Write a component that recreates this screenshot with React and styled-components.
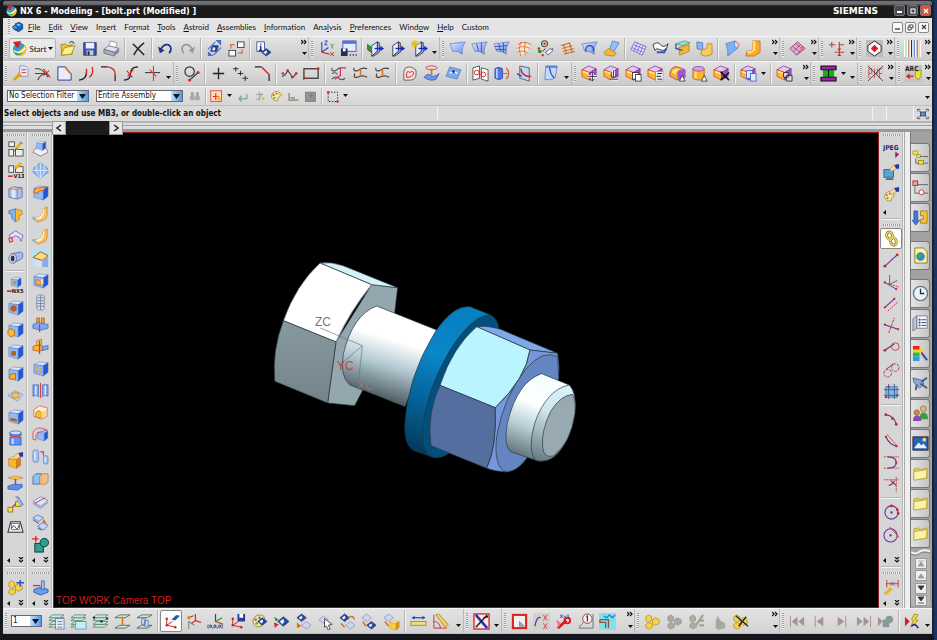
import React from "react";
import styled, { createGlobalStyle, css } from "styled-components";

const GlobalStyle = createGlobalStyle`
  * { box-sizing: border-box; }
  html, body, #root { height: 100%; }
  body {
    margin: 0;
    overflow: hidden;
    background: #1c3565;
    font-family: "DejaVu Sans Condensed", "DejaVu Sans", sans-serif;
    font-size: 8px;
    color: #111;
  }
  button, select { font: inherit; color: inherit; }
`;

/* ---------- drawing helpers ---------- */

const P = ({ d, c = "#333", w = 1, f = "none", dash }) => (
  <path d={d} stroke={c} strokeWidth={w} fill={f} strokeDasharray={dash} />
);

const Dots = ({ at, c = "#d22", r = 1.2 }) =>
  at.map(([x, y]) => <circle key={`${x}-${y}`} cx={x} cy={y} r={r} fill={c} />);

const Cube = ({ x = 0, y = 0, s = 1, top = "#d3e8ff", left = "#8fbcf7", right = "#2455d6", c = "#4a6db5" }) => (
  <g transform={`translate(${x} ${y}) scale(${s})`} stroke={c} strokeWidth=".5">
    <path d="M2 5 L7 2 L17 3 L12 6Z" fill={top} />
    <path d="M2 5 L12 6 L12 17 L2 14Z" fill={left} />
    <path d="M12 6 L17 3 L17 13 L12 17Z" fill={right} />
  </g>
);

const GoldCube = ({ x, y, s }) => (
  <Cube x={x} y={y} s={s} top="#fff3a0" left="#f7cf3e" right="#d99a14" c="#a8780c" />
);

const PurpleCube = () => (
  <>
    <path d="M1 5 L8 1 L16 4 L9 8Z" fill="#e9c6f7" stroke="#84308f" strokeWidth=".8" />
    <path d="M1 5 L9 8 L9 16 L1 12Z" fill="#ffb52e" stroke="#d04a10" strokeWidth=".8" />
    <path d="M9 8 L16 4 L16 12 L9 16Z" fill="#a04fd0" stroke="#84308f" strokeWidth=".8" />
    <path d="M2 6 L8 8 L8 10 L2 8Z" fill="#ffe680" />
  </>
);

const Diamond = ({ x = 9, y = 9, r = 5, f = "#2c4a94" }) => (
  <>
    <path d={`M${x - r - 1} ${y} L${x} ${y - r} L${x + r + 1} ${y} L${x} ${y + r}Z`} fill={f} stroke="#22386f" strokeWidth=".7" />
    <path d={`M${x - r + 1} ${y} L${x} ${y - r + 2} L${x + 1} ${y} L${x - 1} ${y + r - 2}Z`} fill="#eaf2ff" />
  </>
);

const PaleDiamond = ({ x, y }) => (
  <path d={`M${x - 5} ${y} L${x} ${y - 4} L${x + 5} ${y} L${x} ${y + 4}Z`} fill="#cdd7ee" stroke="#8795b8" strokeWidth=".8" />
);

const Layers = () => (
  <>
    {[15, 12, 8, 5].map((y) => (
      <path key={y} d={`M1 ${y} L5 ${y - 3} L17 ${y - 3} L13 ${y}Z`} fill="#c6ecd8" stroke="#4a6d60" strokeWidth=".7" />
    ))}
  </>
);

const Axes = ({ c = "#c22" }) => (
  <>
    <P d="M4 6 V13 L13 15 M4 13 L10 9" c={c} />
    <Dots at={[[4, 6], [13, 15], [4, 13]]} c={c} r={1.3} />
  </>
);

const Prism = ({ x = 0 }) => (
  <>
    <path d={`M${4 + x} 6 L${10 + x} 2 V12 L${4 + x} 17Z`} fill="#e3ecff" stroke="#223" strokeWidth=".8" />
    <path d={`M${10 + x} 2 L${12 + x} 3 V13 L${6 + x} 17 H${4 + x} L${10 + x} 12Z`} fill="#9db7f3" stroke="#223" strokeWidth=".8" />
    <P d={`M${7 + x} 9 H${14 + x}`} c="#1626b8" w={1.4} />
    <path d={`M${13 + x} 6 L${17 + x} 9 L${13 + x} 12Z`} fill="#1626b8" />
  </>
);

const Sheet = ({ f = "url(#sheetFill)" }) => (
  <path d="M1 4 L17 2 Q13 8 14 15 Q9 11 4 12Z" fill={f} stroke="#5a78c0" strokeWidth=".7" />
);

const Palette = () => (
  <>
    <path d="M2 9 Q3 2 10 2 Q16 3 14 9 Q10 10 11 14 Q4 17 2 9Z" fill="#f8e6a0" stroke="#8a6d1c" strokeWidth=".8" />
    <Dots at={[[5, 7]]} c="#d33" r={1.3} />
    <Dots at={[[9, 5]]} c="#28b" r={1.3} />
    <Dots at={[[6, 11]]} c="#3a3" r={1.3} />
  </>
);

const Hand = () => (
  <>
    <path d="M7 5 L12 1 L14 5 L9 8Z" fill="#ffd2a0" stroke="#a86" strokeWidth=".6" />
    <path d="M12 1 L17 0 V5 L14 5Z" fill="#2337a0" />
  </>
);

const Blocks = ({ f = "#f8d34a", c = "#a8810c", third = true }) => (
  <g fill={f} stroke={c} strokeWidth=".7">
    <path d="M2 4 L5 2 L8 4 V8 L5 10 L2 8Z" />
    {third && <path d="M9 7 L12 5 L16 7 V11 L12 13 L9 11Z" />}
    <path d="M2 12 L5 10 L9 12 V15 L5 17 L2 15Z" />
  </g>
);

/* blue block with a yellow feature on its front face */
const Feature = ({ children }) => (
  <>
    <Cube />
    <g fill="#ffb638" stroke="#a85f10" strokeWidth=".8">{children}</g>
  </>
);

const icons = {
  nx: (
    <>
      <circle cx="9" cy="10" r="7" fill="#2f9bd8" />
      <path d="M3 13 Q10 13 15 5 Q19 12 11 17 Q6 18 3 13Z" fill="#f2c522" />
      <path d="M4 9 Q7 15 13 13 Q9 18 4 15Z" fill="#35a853" />
      <P d="M3 11 Q9 17 15 8" c="#fff" w={1.4} />
      <path d="M2 2 L11 1 L7 9Z" fill="#d8201c" />
    </>
  ),
  part: (
    <>
      <path d="M5 4 L11 2 L16 5 V12 L10 16 L4 13Z" fill="#1765b8" stroke="#0b3566" />
      <path d="M1 8 L6 6 L9 9 L6 13 L2 12Z" fill="#3e93e8" stroke="#0b3566" />
      <path d="M7 5 L11 4 L13 6 L9 8Z" fill="#8ec8ff" />
    </>
  ),
  open: (
    <>
      <path d="M2 5 L7 4 L9 6 L14 5 V15 L3 16Z" fill="#e9c53e" stroke="#9a7d14" strokeWidth=".8" />
      <path d="M2 16 L6 8 L17 6 L13 15Z" fill="#fdf08a" stroke="#9a7d14" strokeWidth=".8" />
      <P d="M11 3 Q14 0 16 4" c="#2a8a2a" w={1.4} />
    </>
  ),
  save: (
    <>
      <rect x="3" y="3" width="13" height="13" fill="#3f58b4" stroke="#1d2c68" />
      <rect x="5" y="3" width="9" height="6" fill="#e8f0ff" />
      <rect x="6" y="11" width="7" height="5" fill="#c8ccd8" />
      <rect x="7" y="12" width="2" height="4" fill="#223" />
    </>
  ),
  print: (
    <>
      <path d="M6 7 L8 1 L15 3 L13 9Z" fill="#fff" stroke="#889" strokeWidth=".8" />
      <path d="M1 10 L6 6 L17 9 L12 13Z" fill="#dfe3ec" stroke="#667" strokeWidth=".8" />
      <path d="M1 10 L12 13 V17 L1 14Z" fill="#aab1c0" stroke="#667" strokeWidth=".8" />
      <path d="M12 13 L17 9 V13 L12 17Z" fill="#7f889c" />
    </>
  ),
  cut: <P d="M3 4 L15 16 M15 3 Q8 8 4 16" c="#222" w={1.5} />,
  undo: (
    <>
      <P d="M4 10 Q7 4 12 5 Q17 8 13 14" c="#1c2f80" w={1.8} />
      <path d="M1 7 L3 14 L8 11Z" fill="#1c2f80" />
    </>
  ),
  redo: (
    <>
      <P d="M14 10 Q11 4 6 5 Q1 8 5 14" c="#999" w={1.8} />
      <path d="M17 7 L15 14 L10 11Z" fill="#999" />
    </>
  ),
  swap: (
    <>
      <g transform="rotate(-35 9 9)"><Diamond r={4} /></g>
      <P d="M2 10 L10 2 M8 16 L16 8" c="#4a6fd0" w={1.2} />
      <path d="M10 0 H16 V6Z M2 12 V17 H8Z" fill="#4a6fd0" />
    </>
  ),
  windows: (
    <>
      <rect x="10" y="2" width="7" height="6" fill="#fff" stroke="#444" />
      <rect x="1" y="11" width="7" height="6" fill="#fff" stroke="#444" />
      <P d="M3 9 V5 H7 M11 14 H15 V10" c="#d66a4a" w={1.3} />
    </>
  ),
  info: (
    <>
      <rect x="2" y="2" width="8" height="10" fill="#fff" stroke="#223a8a" strokeWidth=".8" />
      <P d="M6 4 V5 M6 6 V11 M4 11 H8" c="#1b2d80" w={1.6} />
      <Diamond x={12} y={13} r={4} />
    </>
  ),
  wcs: (
    <>
      <P d="M4 2 V13 M4 13 L11 8" c="#2a48c8" w={1.2} />
      <P d="M4 13 L12 15" c="#c22" w={1.2} />
      <P d="M7 1 H10 L7 5 H10" c="#2a48c8" />
      <P d="M13 4 L15 6 L17 4 M15 6 V9" c="#292" />
      <P d="M13 13 L17 17 M17 13 L13 17" c="#c22" />
    </>
  ),
  layoutSave: (
    <>
      <rect x="3" y="1" width="14" height="11" fill="#e5ecff" stroke="#4562b0" />
      <rect x="3" y="1" width="14" height="3" fill="#4f73d8" />
      <rect x="1" y="9" width="7" height="8" fill="#222b55" />
      <rect x="3" y="9" width="3" height="3" fill="#fff" />
      <Dots at={[[11, 16], [14, 16], [17, 16]]} c="#222" r={0.8} />
    </>
  ),
  prismCursor: (<><Prism x={1} /><path d="M0 4 L5 7 L3 13 L0 10Z" fill="#1e9a3a" /><P d="M2 10 L5 13" c="#c22" w={1.5} /></>),
  prism: <Prism x={0} />,
  prismNew: (<><Prism x={1} /><P d="M4 0 V9 M0 4 H9 M1 1 L7 7 M7 1 L1 7" c="#e3c112" w={1.3} /></>),
  sheet: <Sheet />,
  sheetTwo: (<><Sheet /><P d="M6 4 L8 12 M11 3 L11 13" c="#3450b8" /></>),
  sheetGrid: (<><Sheet /><P d="M6 4 L8 12 M11 3 L11 13 M2 7 L15 6 M3 10 L14 10" c="#3450b8" /></>),
  mesh: (
    <>
      <path d="M3 5 L10 2 L16 5 L13 14 L6 16 L2 12Z" fill="#ffe3cc" />
      <P d="M3 5 Q9 0 17 5 M2 9 Q9 5 16 9 M2 13 Q9 10 14 14 M6 2 Q3 9 6 17 M11 2 Q9 9 11 16" c="#d2703a" w={0.9} />
    </>
  ),
  curveNet: (
    <>
      <P d="M9 9 L6 12 M10 13 L17 9" c="#333" />
      <circle cx="8" cy="4" r="3.2" fill="none" stroke="#353" strokeWidth="1.2" />
      <path d="M9 13 L14 9 L17 11 L12 16Z" fill="#eef" stroke="#447" strokeWidth=".8" />
      <Dots at={[[3, 12]]} c="#292" r={2} />
      <Dots at={[[8, 4], [6, 16], [2, 9]]} c="#d22" r={1.3} />
    </>
  ),
  ribbons: (
    <>
      <path d="M2 8 L12 3 L16 8 L6 14Z" fill="#ffd89a" />
      <P d="M2 6 L12 3 M3 9 L14 6 M4 12 L16 9 M5 15 L17 12" c="#e07a20" w={1.2} />
      <P d="M5 5 L8 15 M11 3 L14 13" c="#3a62c8" w={0.8} />
    </>
  ),
  patch: (<><Sheet /><P d="M5 12 Q5 6 9 6 Q14 6 13 12" c="#2b3f98" w={1.2} /></>),
  sweep: (
    <>
      <path d="M10 1 L17 3 L11 13 L7 10Z" fill="#8fc3f7" stroke="#3f6dc0" strokeWidth=".7" />
      <path d="M1 13 L6 9 L14 14 L12 17 L3 16Z" fill="#fbb92e" stroke="#b06d10" strokeWidth=".7" />
    </>
  ),
  grid: (
    <>
      <path d="M5 2 L17 7 L13 16 L1 10Z" fill="#dde4ff" />
      <P d="M5 2 L17 7 L13 16 L1 10Z M4 5 L16 10 M2 8 L14 13 M8 3 L4 12 M11 5 L7 13 M14 6 L10 15" c="#7b69cf" w={0.9} />
    </>
  ),
  bands: (<><path d="M1 5 Q6 1 9 5 T17 4 L15 10 Q11 12 8 10 T3 11Z" fill="#fff" stroke="#222" strokeWidth=".9" /><P d="M5 13 H13 L15 9" c="#3158c8" w={2} /></>),
  trim: (
    <>
      <path d="M2 4 L11 1 L17 3 L9 6Z" fill="#9ee0c0" stroke="#387" strokeWidth=".7" />
      <path d="M5 8 L16 5 V12 L6 16Z" fill="#f8b638" stroke="#a86a10" strokeWidth=".7" />
      <P d="M2 4 V9 L9 11" c="#2a58b8" w={1.4} />
    </>
  ),
  extend: (<><path d="M1 2 L7 3 V11 L1 9Z" fill="#89b7f6" stroke="#3b62b0" strokeWidth=".7" /><path d="M7 9 Q12 12 12 4 L17 4 V15 Q10 19 5 15Z" fill="#fcc860" stroke="#b5731a" strokeWidth=".7" /></>),
  offsetFace: (<><path d="M3 4 L13 1 Q10 6 15 9 L5 17 Q6 10 3 4Z" fill="#7fb0f5" stroke="#4a6dba" strokeWidth=".7" /><P d="M13 1 L17 5 L15 9" c="#c25" w={0.8} /></>),
  flange: (<><path d="M8 1 H16 V13 L10 17 H1 L2 12 L8 11Z" fill="#fbab26" stroke="#b8620a" strokeWidth=".7" /><path d="M8 1 H11 V11 L4 15 L2 12 L8 11Z" fill="#ffe07a" /></>),
  surface: (<><path d="M1 9 L9 2 L17 9 L8 16Z" fill="#c4b2e6" stroke="#b02a4a" strokeWidth=".9" /><P d="M4 7 L12 13 M7 4 L15 10 M5 12 L12 5 M9 15 L15 7" c="#c23a5a" w={0.8} /></>),
  dims: (<><P d="M1 5 H8 M11 5 H17 M4 2 V8 M12 2 V16 M7 13 H17" c="#b44" w={1.2} /><path d="M10 9 L12 12 L14 9Z M10 17 L12 14 L14 17Z" fill="#d22" /></>),
  gem: (<><rect x="0" y="0" width="18" height="18" fill="#bdbdbd" /><path d="M9 1 L16 6 V12 L9 17 L2 12 V6Z" fill="#fff" stroke="#222" /><path d="M9 5 L13 9 L9 13 L5 9Z" fill="#e3161a" /></>),
  stripes: (<><rect width="18" height="18" fill="#fff" /><P d="M2 0 V18" c="#8f8" w={1.5} /><P d="M5 0 V18" c="#d88" w={1.5} /><P d="M8 0 V18" c="#333" w={1.3} /><P d="M11 0 V18 M14 0 V18" c="#68c" w={1.4} /><P d="M16 0 V18" c="#fc6" w={1.5} /></>),

  sketchEdit: (<><path d="M8 1 H14 L17 4 V12 H8Z" fill="#e3e8fa" stroke="#88a" strokeWidth=".8" /><P d="M10 5 H15 M10 8 H15" c="#d33" /><P d="M2 16 L8 10" c="#d9a514" w={3} /><P d="M6 9 L10 12" c="#d9a514" w={2.4} /></>),
  trimCurve: (<><P d="M1 4 H5 Q10 5 15 13 M1 9 H12 M4 16 Q7 9 14 9" c="#444" w={1.2} /><P d="M10 4 L17 13 M16 6 L10 11" c="#d22" w={1.2} /></>),
  sheetCorner: (<><path d="M2 2 H10 L16 9 V16 H2Z" fill="#e9ecfb" stroke="#2b3c92" w={1} /><P d="M10 3 L15 9" c="#e88a1a" w={1.8} /></>),
  arcPair: (<><P d="M1 16 Q9 16 9 7" c="#222" w={1.4} /><P d="M9 4 V10 M15 2 Q17 9 12 13" c="#d22" w={1.4} /></>),
  fillet: (<><P d="M1 2 H8" c="#222" w={1.3} /><P d="M8 2 Q16 3 16 10" c="#d22" w={1.5} /><P d="M16 10 V17" c="#222" w={1.3} /></>),
  sCurve: (<><P d="M17 2 Q9 2 9 9 Q9 16 2 16" c="#222" w={1.3} /><P d="M5 6 L11 13 M12 5 L6 12" c="#d22" w={1.2} /></>),
  cross: (<><P d="M1 8 H17" c="#444" w={1.2} /><P d="M10 1 V17 M6 5 L13 12" c="#d33" w={1.1} /></>),
  circleLine: (<><circle cx="7" cy="7" r="5" fill="none" stroke="#333" strokeWidth="1.2" /><P d="M7 16 L16 8" c="#333" w={1.3} /><Dots at={[[7, 16], [16, 8]]} r={1.6} /></>),
  plus: <P d="M9 3 V15 M3 9 H15" c="#222" w={1.4} />,
  pluses: <P d="M4 2 V7 M1 4 H7 M9 6 V11 M6 9 H12 M14 11 V17 M11 14 H17" c="#333" w={1.1} />,
  chamfer: (<><P d="M1 2 H8" c="#222" w={1.3} /><P d="M8 2 L16 10" c="#d22" w={1.5} /><P d="M16 10 V17" c="#222" w={1.3} /></>),
  spline: (<><P d="M1 12 Q4 12 7 6 Q10 9 12 13 Q14 12 17 8" c="#444" w={1.2} /><Dots at={[[2, 9], [7, 6], [12, 13], [16, 9]]} r={1.4} /></>),
  rect: (<><rect x="1" y="4" width="15" height="10" fill="none" stroke="#222" strokeWidth="1.2" /><Dots at={[[1, 14], [16, 4]]} r={1.5} /></>),
  curvesA: (<><P d="M2 3 Q1 7 6 6 Q9 3 11 3 M2 9 Q6 7 8 10 M2 15 Q6 11 9 14 T16 14" c="#555" w={1.2} /><P d="M5 15 L11 11 V3 H17" c="#d25" w={1.2} /></>),
  curvesB: (<><P d="M2 3 Q1 7 6 6 Q11 2 16 4 M3 9 Q1 14 6 13 Q11 10 16 13" c="#444" w={1.2} /><P d="M9 5 V12" c="#e0701a" w={1.6} /></>),
  contour: (<><path d="M3 16 V8 Q3 2 9 2 Q17 3 16 9 Q16 16 10 16Z" fill="#f4dede" stroke="#555" strokeWidth=".9" /><P d="M6 13 V9 Q7 5 9 8 Q14 5 13 10 Q12 13 6 13Z" c="#d22" /></>),
  project: (<><path d="M1 13 Q5 8 8 11 T17 9 L14 15 Q8 18 1 13Z" fill="#6d97ee" stroke="#2747a0" strokeWidth=".7" /><ellipse cx="9" cy="3" rx="6" ry="2" fill="none" stroke="#d33" strokeWidth=".9" /><P d="M9 4 V11" c="#e0701a" w={1.8} /></>),
  bluePatch: (<><path d="M5 2 L17 5 L13 15 L1 12Z" fill="#7ba8f3" stroke="#5a78c0" strokeWidth=".7" /><P d="M5 9 Q9 5 13 9" c="#fff" w={1.4} /><Dots at={[[9, 7]]} c="#223" r={1.4} /></>),
  mirror: (<><path d="M1 3 L8 1 V14 L1 16Z M10 3 L17 5 V17 L10 15Z" fill="#fff" stroke="#444" strokeWidth=".9" /><circle cx="5" cy="8" r="2.5" fill="none" stroke="#d22" /><circle cx="12" cy="10" r="2.5" fill="none" stroke="#d22" /></>),
  wrap: (<><path d="M1 4 Q5 1 9 4 V14 Q5 17 1 14Z" fill="#4f79e6" stroke="#2443a0" strokeWidth=".8" /><P d="M3 4 V14" c="#bcd2ff" w={1.8} /><P d="M9 9 H14 M13 3 Q18 9 13 15" c="#e0501a" w={1.2} /></>),
  isocline: (<><path d="M4 1 L14 3 V17 L4 14Z" fill="#bcd7fb" stroke="#445" strokeWidth=".8" /><P d="M5 4 Q7 13 16 12" c="#d22" w={1.5} /><P d="M1 9 L6 12" c="#24a" w={1.4} /></>),
  section: (<><path d="M3 1 H15 L13 13 Q9 17 2 15Z" fill="#c3d8fa" stroke="#5a78b8" strokeWidth=".8" /><P d="M7 1 Q7 9 12 14" c="#2648b0" w={1.2} /><rect x="3" y="1" width="12" height="2" fill="#5a83d8" /></>),

  cubeMove: (<><PurpleCube /><P d="M12 7 V17 M7 12 H17" c="#fff" w={3} /><P d="M12 7 V17 M7 12 H17 M10 9 L12 7 L14 9 M10 15 L12 17 L14 15" c="#223" /></>),
  cubePull: (<><PurpleCube /><P d="M11 6 V13 M8 15 H16" c="#fff" w={3} /><P d="M11 6 V13 M7 15 H16 M8 11 L11 14 L14 11" c="#223" /></>),
  cubeCopy: (<><PurpleCube /><rect x="8" y="8" width="6" height="7" fill="#fff" stroke="#222" strokeWidth=".8" /><rect x="11" y="10" width="6" height="7" fill="#fff" stroke="#222" strokeWidth=".8" /></>),
  cubeList: (<><PurpleCube /><rect x="9" y="7" width="8" height="10" fill="#eee" stroke="#999" strokeWidth=".6" /><P d="M11 9 H16 M10 12 H15 M11 15 H16" c="#222" /></>),
  roundCube: (<><path d="M1 8 Q3 1 9 2 L17 5 V13 L9 16 L1 12Z" fill="#f5b12e" stroke="#b3323a" strokeWidth=".8" /><path d="M9 8 Q10 4 17 5 V13 L9 16Z" fill="#a355d0" /><path d="M3 8 Q4 4 9 4 L12 5 Q8 5 7 10Z" fill="#ffe680" /><path d="M11 17 L14 11 L17 17Z" fill="#fff" stroke="#222" strokeWidth=".8" /></>),
  goldCyl: (<><path d="M2 4 V14 Q9 18 14 14 V4Z" fill="#f8b52a" stroke="#b3621a" strokeWidth=".8" /><ellipse cx="8" cy="4" rx="6" ry="2.5" fill="#d9a0e8" stroke="#8a3a9a" strokeWidth=".8" /><P d="M5 7 V14" c="#ffe88a" w={2} /><path d="M11 17 L14 11 L17 17Z" fill="#fff" stroke="#222" strokeWidth=".8" /></>),
  cubeDelete: (<><PurpleCube /><P d="M8 7 L17 16 M17 8 L8 16" c="#111" w={1.6} /></>),
  cubePaste: (<><PurpleCube /><rect x="7" y="6" width="6" height="8" fill="#dfe8ff" stroke="#35c" strokeWidth=".8" /><rect x="11" y="9" width="6" height="8" fill="#dfe8ff" stroke="#35c" strokeWidth=".8" /></>),
  cubePattern: (<><PurpleCube /><P d="M8 8 H13 V13 H8Z M11 11 H17 V17 H11Z" c="#222" f="#ddd" w={0.9} /></>),
  spool: (<><rect x="1" y="1" width="16" height="4" fill="#a021b0" /><rect x="1" y="13" width="16" height="4" fill="#a021b0" /><rect x="3" y="5" width="12" height="8" fill="#14b414" /><P d="M1 5 H17 M1 13 H17 M9 5 V13 M1 1 H17 V5 H1Z M1 13 H17 V17 H1Z" c="#111" w={1.2} /></>),
  route: (<><rect width="18" height="18" fill="#ddd2d0" /><P d="M2 14 V4 H5 V9 H2 M8 4 V14 M8 9 H11 V4 M13 14 V4 H16 M13 9 H16" c="#d44" /><P d="M1 1 L17 17 M17 1 L1 17" c="#333" w={0.9} /></>),
  bucket: (<><rect width="18" height="18" fill="#c5c5c5" /><path d="M11 7 L17 5 V12 L14 16 L11 12Z" fill="#f0e032" stroke="#990" strokeWidth=".8" /><P d="M2 12 H9" c="#d22" w={1.6} /><path d="M1 12 L5 9 V15Z" fill="#d22" /><text x="0" y="6" fontSize="7" fontWeight="700" fill="#222">ARC</text></>),

  find: (<><circle cx="6" cy="11" r="3.5" fill="#aaa" /><circle cx="13" cy="11" r="3.5" fill="#aaa" /><path d="M4 3 H8 V10 H4Z M11 3 H15 V10 H11Z" fill="#a4a4a4" /></>),
  snap: (<><rect x="1" y="1" width="15" height="15" fill="#f9dfc0" stroke="#d55" strokeWidth="1.4" /><P d="M8 4 V14 M4 9 H13" c="#d22" w={1.4} /><path d="M9 7 L16 12 L11 16Z" fill="#f5b921" /></>),
  back: <P d="M15 6 V12 H5 M8 8 L4 12 L8 16" c="#8fa5a5" w={2} />,
  hint: (<><P d="M4 6 H14 M9 2 V15 M5 14 L14 5" c="#aaa" w={1.6} /><Dots at={[[14, 12]]} c="#e2b84a" r={2} /></>),
  color: (<><Palette /><path d="M10 5 L17 3 V9Z" fill="#f2c531" /></>),
  step: <P d="M3 4 V14 H16 M5 11 H11" c="#9a9a8a" w={2.4} />,
  grayBox: (<><rect x="2" y="3" width="14" height="13" fill="#929292" stroke="#777" /><P d="M7 8 H13 M10 5 V11" c="#777" /></>),
  marquee: (<><rect x="3" y="3" width="13" height="13" fill="none" stroke="#222" strokeWidth="1.3" strokeDasharray="2 2" /><Dots at={[[3, 3], [16, 16]]} r={1.7} /></>),

  sketch: (<><rect x="2" y="2" width="6" height="5" fill="#eee" stroke="#444" strokeWidth=".9" /><rect x="2" y="10" width="5" height="7" fill="#eee" stroke="#444" strokeWidth=".9" /><rect x="9" y="10" width="8" height="7" fill="#eee" stroke="#444" strokeWidth=".9" /><P d="M9 10 L15 3" c="#e8b414" w={3} /><P d="M8 12 L10 9 M14 2 L16 4" c="#333" /></>),
  sketchOld: (<><rect x="2" y="4" width="5" height="7" fill="#eee" stroke="#444" strokeWidth=".9" /><rect x="9" y="5" width="8" height="6" fill="#eee" stroke="#444" strokeWidth=".9" /><P d="M9 7 L15 1" c="#e8b414" w={3} /><text x="7" y="17" fontSize="6" fontWeight="700" fill="#223">V13</text><P d="M1 15 H6" c="#d22" w={1.6} /></>),
  extrude: (<><path d="M2 5 L7 3 L16 4 V14 L11 16 L2 14Z" fill="#a6bff5" stroke="#4356a8" strokeWidth=".7" /><path d="M5 4 H9 V15 L5 14Z" fill="#dfe8ff" /><P d="M2 5 L11 6 L16 4 M11 6 V16" c="#e08a1a" w={1.2} /></>),
  revolve: (<><path d="M2 5 L9 3 V17 L5 13 V9 L2 8Z" fill="#7fb6f2" stroke="#3a62b0" strokeWidth=".7" /><path d="M9 3 L16 5 V9 L13 10 V14 L9 17Z" fill="#f8bb36" stroke="#a8741a" strokeWidth=".7" /></>),
  sweepGuide: (<><path d="M2 8 L9 3 L17 8 L15 14 L13 10 L9 8 L5 11Z" fill="#e8e0fa" stroke="#6647b8" strokeWidth=".8" /><P d="M2 11 L5 10 L6 14 L3 15Z" c="#d44" w={1.3} /></>),
  tube: (<><path d="M5 5 L15 3 Q18 5 16 10 L7 15Z" fill="#a6b8ee" stroke="#4a5690" strokeWidth=".7" /><ellipse cx="6" cy="10" rx="4" ry="5" fill="#dfe5f7" stroke="#4a5690" strokeWidth=".8" /><ellipse cx="6" cy="10" rx="2" ry="3" fill="#27305c" /></>),
  holeOld: (<><Cube x={3} y={-1} s={0.7} /><circle cx="8" cy="6" r="2" fill="#e08a2a" /><P d="M0 15 H5" c="#d22" w={1.8} /><text x="5" y="17" fontSize="6" fontWeight="700" fill="#223">NX5</text></>),
  hole: <Feature><circle cx="7" cy="10" r="3" fill="#c55a1a" /></Feature>,
  boss: <Feature><path d="M1 10 L4 8 L8 10 V15 L4 17 L1 14Z" /></Feature>,
  pocket: <Feature><path d="M5 9 H9 V13 H5Z" fill="#c55a1a" /></Feature>,
  pad: <Feature><path d="M3 10 L9 9 V15 L3 15Z" /></Feature>,
  emboss: (<><path d="M1 9 L8 4 L17 8 L11 15Z" fill="#bcd8fa" stroke="#6a88c0" strokeWidth=".7" /><ellipse cx="9" cy="9" rx="4" ry="3" fill="#f8c548" stroke="#a8741a" strokeWidth=".7" /></>),
  slot: <Feature><path d="M4 11 L10 12 V14 L4 13Z" fill="#d8501a" /></Feature>,
  groove: (<><path d="M3 3 H15 V6 H13 V8 H15 V16 H3 V8 H5 V6 H3Z" fill="#5f8ff0" stroke="#2f4fae" strokeWidth=".7" /><P d="M6 9 V15" c="#c5d9ff" w={2.4} /><ellipse cx="9" cy="3" rx="6" ry="2" fill="#cfe2ff" stroke="#2f4fae" strokeWidth=".7" /><P d="M4 7 H14" c="#d33" /></>),
  udf: (<><Cube y={3} x={0} s={0.85} top="#ffe487" left="#fbb52c" right="#d8821a" c="#a8610c" /><Hand /></>),
  thicken: (<><path d="M1 4 L9 2 L17 4 L9 6Z" fill="#fbc55a" stroke="#c0741a" strokeWidth=".6" /><P d="M9 5 V11" c="#d33" w={1.5} /><path d="M1 13 L7 11 H16 V14 L11 17 L1 16Z" fill="#5f8fee" stroke="#2747a0" strokeWidth=".7" /></>),
  instance: (<><P d="M5 13 L12 5" c="#c33" w={1.3} /><path d="M1 12 H6 V17 H1Z M9 6 H14 V11 H9Z" fill="#f6e04a" stroke="#8a7810" strokeWidth=".9" /><path d="M9 1 L12 1 L17 9 L14 11" fill="#9ab6ea" stroke="#3a4f90" strokeWidth=".7" /></>),
  wire: (<><path d="M4 4 H14 L17 15 H1Z" fill="#e8e8e8" stroke="#333" strokeWidth="1.1" /><rect x="5" y="6" width="8" height="6" fill="#fff" stroke="#446" strokeWidth=".7" /><P d="M5 11 Q7 6 9 10 T13 7" c="#334" /></>),
  datum: (<><path d="M1 13 L5 7 H14 L17 13 L9 17Z" fill="#eaf0ff" stroke="#c0504a" strokeWidth=".8" /><Cube x={3.5} y={0} s={0.65} /></>),
  sphere: (<><path d="M9 1 L16 6 L17 11 L9 17 L1 11 L2 6Z" fill="#8fb8f5" stroke="#5a7cc0" strokeWidth=".7" /><P d="M9 1 V17 M1 9 H17 M5 3 Q3 10 9 17 M13 3 Q15 10 9 17" c="#eef5ff" w={0.7} /></>),
  blend: (<><Cube /><path d="M2 9 Q2 4 7 4 L15 3 L12 7 Q7 6 6 10Z" fill="#fbb53a" stroke="#c0401a" strokeWidth=".8" /></>),
  law: (<><path d="M1 13 L7 12 Q11 11 12 3 L16 1 V9 Q16 14 12 15 L6 17Z" fill="#fbc262" stroke="#c0762a" strokeWidth=".7" /><path d="M1 13 L7 12 Q11 11 12 3 L13 3 Q13 12 8 14Z" fill="#fff3d0" /><Dots at={[[2, 13]]} c="#8ac" r={1.5} /></>),
  draft: (<><rect width="18" height="18" fill="#b5e2f2" /><path d="M1 8 L9 2 L17 6 L11 11 Z" fill="#f6e07a" stroke="#a8521a" /><path d="M1 9 L10 12 V18 H3Z" fill="#d5def5" /><path d="M11 11 L17 7 V18 H11Z" fill="#8fa9e4" /></>),
  shell: (<><Cube /><path d="M4 8 L9 9 L10 14 L4 13Z" fill="#f4b04a" stroke="#a8621a" strokeWidth=".7" /><path d="M9 9 L12 7 V12 L10 14Z" fill="#ffe0a0" /></>),
  thread: (<><rect x="5" y="1" width="8" height="16" rx="2" fill="#d5dae6" stroke="#889" strokeWidth=".8" /><P d="M5 4 H13 M5 7 H13 M5 10 H13 M5 13 H13 M9 1 V17" c="#7484aa" w={0.9} /></>),
  pads: (<><path d="M5 2 H8 V8 H5Z M10 2 H13 V8 H10Z" fill="#f09a3a" stroke="#a8561a" strokeWidth=".7" /><path d="M1 9 L6 7 L17 9 V13 L9 15 L1 13Z" fill="#7fa9f2" stroke="#3f5fb0" strokeWidth=".7" /><P d="M8 9 V17" c="#d33" w={1.3} /></>),
  unite: (<><path d="M1 9 L6 7 L12 9 V13 L7 14 L1 13Z" fill="#f6b53c" stroke="#b35f1a" strokeWidth=".8" /><path d="M5 3 L10 1 V7 L5 8Z" fill="#f6c95c" stroke="#b35f1a" strokeWidth=".7" /><path d="M11 9 L17 8 V12 L11 13Z" fill="#7fa9f2" stroke="#3f5fb0" strokeWidth=".7" /><P d="M8 3 V17" c="#d33" w={1.3} /></>),
  pattern: (<><Cube /><Dots at={[[5, 8], [9, 9], [5, 12], [9, 13]]} c="#e09a4a" r={1.3} /></>),
  mirrorBody: (<><path d="M1 3 H7 V16 L5 14 L1 15Z M11 3 H17 V15 L13 14 L11 16Z" fill="#7fa6f0" stroke="#3f5fb0" strokeWidth=".7" /><P d="M4 4 V14 M14 4 V14" c="#dbe7ff" w={1.6} /><P d="M9 1 V17" c="#d33" /></>),
  wrapBox: (<><path d="M2 6 L8 2 L16 4 V13 L10 16 L2 13Z" fill="#fdf1d8" stroke="#d04a3a" strokeWidth=".7" /><path d="M4 14 V9 Q7 5 10 9 V15Z" fill="#f7bd3a" stroke="#a8741a" strokeWidth=".7" /><path d="M10 9 L15 6 V12 L10 15Z" fill="#fad879" /></>),
  offsetBox: (<><Cube x={4} y={3} s={0.75} /><path d="M1 14 V7 Q3 2 9 2 L16 4 L11 6 Q5 6 4 11 V15Z" fill="none" stroke="#d04a5a" strokeWidth=".9" /></>),
  cylinders: (<><rect x="1" y="2" width="6" height="13" rx="2" fill="#a4c1f6" stroke="#5a7cc0" strokeWidth=".7" /><rect x="12" y="8" width="5" height="9" rx="2" fill="#a4c1f6" stroke="#5a7cc0" strokeWidth=".7" /><P d="M3 4 V13 M14 10 V15" c="#e8f0ff" w={1.4} /><P d="M9 4 H12 V8" c="#d33" w={1.3} /></>),
  twinBox: (<><path d="M1 7 L4 4 H10 V12 L8 15 H1Z" fill="#8fc0ee" stroke="#3a62a0" strokeWidth=".8" /><path d="M8 7 L11 4 H17 V12 L15 15 H8Z" fill="#f6bd7a" stroke="#c0661a" strokeWidth=".8" opacity=".85" /></>),
  plate: (<><path d="M1 10 L9 5 L17 9 L9 15Z" fill="#dde6fb" stroke="#5a6fb0" strokeWidth=".7" /><P d="M1 12 L9 17 L17 11" c="#5a6fb0" w={0.8} /><P d="M3 12 L14 6" c="#d33" /></>),
  plates: (<><path d="M1 4 L6 1 L12 4 L7 8Z M6 13 L11 9 L17 12 L12 17Z" fill="#c5d7fa" stroke="#4359a0" strokeWidth=".7" /><path d="M12 5 L16 10 L11 9Z" fill="#e0701a" /><P d="M1 6 L7 10 M6 15 L10 17" c="#33498f" /></>),
  addBool: (<><P d="M4 0 V7 M0 3 H7" c="#d22" w={1.3} /><rect x="3" y="8" width="9" height="9" fill="#2fa08a" stroke="#134" /><circle cx="13" cy="7" r="4.5" fill="#2fa08a" stroke="#134" /></>),
  assembly: (<><Blocks /><P d="M14 1 V8 M10 4 H18" c="#2a52c0" w={1.6} /></>),
  blueAdd: (<><path d="M2 11 L8 9 L17 11 V14 L9 17 L2 14Z" fill="#6d9df0" stroke="#2747a0" strokeWidth=".8" /><path d="M10 2 H13 V11 H10Z" fill="#a4c6fa" stroke="#2747a0" strokeWidth=".7" /><P d="M1 7 H9" c="#d33" w={1.4} /></>),

  jpeg: (<><text x="0" y="9" fontSize="7" fontWeight="700" fill="#27246e">JPEG</text><path d="M13 11 L17 14 L13 18Z" fill="#a0148c" /></>),
  monitor: (<><rect x="1" y="6" width="10" height="8" fill="#56a7d8" stroke="#345" strokeWidth=".8" /><P d="M3 16 H11" c="#456" w={1.6} /><Hand /></>),
  paintHand: (<><g transform="translate(0 3) scale(.8)"><Palette /></g><Hand /></>),
  chain: (<g fill="none" stroke="#8a7a1c" strokeWidth="3"><ellipse cx="7" cy="6" rx="3" ry="4" transform="rotate(-20 7 6)" /><ellipse cx="11" cy="12" rx="3" ry="4" transform="rotate(-20 11 12)" /><g stroke="#e2d468" strokeWidth="1.6"><ellipse cx="7" cy="6" rx="3" ry="4" transform="rotate(-20 7 6)" /><ellipse cx="11" cy="12" rx="3" ry="4" transform="rotate(-20 11 12)" /></g></g>),
  line: (<><P d="M2 15 L15 3" c="#63309a" w={1.2} /><Dots at={[[2, 15], [15, 3]]} c="#c22" r={1.5} /></>),
  lineAxes: (<><P d="M7 1 V11 L15 7" c="#777" w={1.2} /><P d="M2 9 L14 16" c="#63309a" /><P d="M5 10 L17 14" c="#c33" dash="2 1" /><Dots at={[[2, 9], [14, 16]]} c="#c22" /></>),
  parallel: (<><P d="M2 12 L12 3" c="#63309a" w={1.2} /><P d="M5 16 L16 6" c="#c33" dash="2 1" /><Dots at={[[2, 12], [12, 3]]} c="#c22" /></>),
  lineCross: (<><P d="M1 8 L16 13" c="#63309a" w={1.2} /><P d="M6 17 L12 1" c="#c33" dash="3 1" /><Dots at={[[2, 8], [16, 13]]} c="#c22" /></>),
  tangent: (<><P d="M2 12 L12 5" c="#63309a" w={1.2} /><circle cx="13" cy="8" r="4" fill="none" stroke="#c33" strokeWidth=".9" /><Dots at={[[2, 12]]} c="#c22" r={1.5} /></>),
  twoCircles: (<><circle cx="5" cy="13" r="4" fill="none" stroke="#c33" strokeDasharray="3 1" /><circle cx="13" cy="7" r="4" fill="none" stroke="#c33" strokeDasharray="3 1" /><P d="M3 9 L11 3" c="#63309a" /></>),
  hatch: (<><rect x="3" y="4" width="12" height="11" fill="#7fbbe8" stroke="#3a6aa8" strokeWidth=".8" /><P d="M6 1 V17 M12 1 V17 M1 7 H17 M1 13 H17" c="#3a5f98" /><Dots at={[[6, 4], [15, 13], [3, 15]]} c="#c22" /></>),
  arc: (<><P d="M3 4 Q12 5 14 14" c="#63309a" w={1.2} /><Dots at={[[3, 4], [10, 8], [14, 14]]} c="#c22" r={1.5} /></>),
  arcLine: (<><P d="M3 4 Q7 13 15 14" c="#63309a" w={1.2} /><P d="M4 1 L16 15" c="#c33" w={0.8} /><Dots at={[[3, 4], [14, 14]]} c="#c22" /></>),
  arcBars: (<><P d="M1 3 H17 M1 15 H17" c="#c33" dash="2 1" /><P d="M5 3 Q14 3 14 9 T5 15" c="#63309a" w={1.2} /><Dots at={[[14, 9]]} c="#c22" /></>),
  arcCorner: (<><P d="M1 4 H17 M14 1 V17" c="#c33" dash="2 1" /><P d="M6 10 Q11 9 12 5 M8 5 L14 10" c="#8a2450" w={1.1} /></>),
  circle: (<><circle cx="9" cy="9" r="7" fill="none" stroke="#63309a" strokeWidth="1.1" /><Dots at={[[9, 9]]} c="#339" /><Dots at={[[9, 2], [15, 6], [16, 10]]} c="#c22" r={1.4} /></>),
  circleTan: (<><circle cx="8" cy="10" r="7" fill="none" stroke="#63309a" strokeWidth="1.1" /><P d="M7 1 L17 12" c="#c33" /><Dots at={[[8, 10]]} c="#339" /></>),
  dimWrench: (<><P d="M4 1 V9 M16 1 V9 M4 5 H16 M8 3 L12 7 M12 3 L8 7" c="#c33" /><P d="M2 16 L9 10" c="#e0b81a" w={3} /></>),

  navParts: (<><path d="M1 2 H6 V6 H1Z M5 6 H9 V9 H5Z" fill="#f4e44a" stroke="#a8981a" strokeWidth=".8" /><P d="M4 10 V15 H17 M9 8 H17" c="#555" w={0.9} /><rect x="7" y="12" width="5" height="4" fill="#f4e44a" stroke="#887a10" strokeWidth=".8" /></>),
  navConstraints: (<><rect x="1" y="2" width="5" height="5" fill="#eba0a0" stroke="#a33" /><P d="M3 8 V15 H17 M6 6 H17" c="#555" w={0.9} /><circle cx="10" cy="14" r="2.6" fill="#fff" stroke="#c33" /></>),
  navHistory: (<><path d="M2 2 H6 V12 H8 L4 17 L0 12 H2Z" fill="#3f78dc" stroke="#24488f" strokeWidth=".7" /><path d="M9 2 H16 V15 H9 V11 H12 V7 H9Z" fill="#f5c537" stroke="#9a7410" strokeWidth=".8" /></>),
  webPage: (<><path d="M3 1 H12 L16 5 V17 H3Z" fill="#fbf3a8" stroke="#8a7d2a" /><circle cx="9" cy="10" r="4.5" fill="#2f86d8" /><path d="M7 7 L11 8 L9 12 L6 11Z" fill="#3fb04a" /></>),
  clock: (<><circle cx="9" cy="9" r="7.5" fill="#e9f3fa" stroke="#678" strokeWidth="1.4" /><P d="M9 4 V9 H13" c="#234" w={1.4} /></>),
  roles: (<><path d="M5 1 H16 V14 H5Z" fill="#f6f9ff" stroke="#667" strokeWidth=".8" /><path d="M1 4 L5 1 V14 L1 17Z" fill="#b8c8de" stroke="#667" strokeWidth=".8" /><P d="M10 5 H15 M10 8 H15 M10 11 H15" c="#346" /><Dots at={[[8, 5]]} c="#d22" /><Dots at={[[8, 8]]} c="#25c" /><Dots at={[[8, 11]]} c="#2a2" /></>),
  spectrum: (<><rect x="1" y="1" width="7" height="4" fill="#e22" /><rect x="1" y="5" width="7" height="3" fill="#f3d21c" /><rect x="1" y="8" width="7" height="4" fill="#2db84a" /><rect x="1" y="12" width="7" height="5" fill="#28a0e0" /><P d="M9 7 L16 16" c="#4848a8" w={2.4} /><P d="M9 3 V10 M6 6 H13" c="#e8e040" w={1.5} /></>),
  tool: (<><path d="M1 3 L12 6 V10 L8 14 L2 8Z" fill="#8fa6d4" stroke="#4a5c8c" strokeWidth=".8" /><P d="M10 7 L16 3 M9 9 L16 14 M5 10 L4 16" c="#445a90" w={2} /></>),
  people: (<><circle cx="12" cy="4" r="3" fill="#eab67a" stroke="#8b6a3c" strokeWidth=".8" /><path d="M8 15 Q8 8 12 8 Q17 8 17 15Z" fill="#3a9c3a" /><circle cx="5" cy="8" r="2.8" fill="#d8844a" stroke="#8b5a3c" strokeWidth=".8" /><path d="M1 17 Q1 11 5 11 Q10 11 10 17Z" fill="#8a4ab8" /></>),
  picture: (<><rect x="1" y="2" width="16" height="14" fill="#2a63b8" stroke="#223" /><path d="M2 14 L7 8 L10 11 L12 9 L16 14Z" fill="#e7f1ff" /><Dots at={[[13, 5]]} c="#f5e04a" r={2} /></>),
  folder: (<><path d="M2 4 L7 3 L8 5 L16 3 V14 L2 16Z" fill="#e3c95a" stroke="#b09a3c" strokeWidth=".7" /><path d="M2 7 L16 5 L15 14 L2 16Z" fill="#fbf2a4" stroke="#b09a3c" strokeWidth=".7" /></>),

  layerList: (<><Layers /><rect x="8" y="6" width="9" height="11" fill="#e6ecfb" stroke="#5a6fb0" strokeWidth=".8" /><P d="M10 9 H15 M10 12 H15 M10 15 H15" c="#778" /></>),
  layerWin: (<><Layers /><rect x="6" y="9" width="11" height="8" fill="#c5ecf8" stroke="#3b9bc0" strokeWidth=".8" /></>),
  layers: (<><Layers /><Dots at={[[2, 5], [10, 9], [16, 6]]} c="#223" /></>),
  layerMove: (<><path d="M1 5 L6 2 H17 L12 5Z M1 16 L6 13 H17 L12 16Z" fill="#c6ecd8" stroke="#37594c" strokeWidth=".8" /><P d="M9 4 V13" c="#e0701a" w={1.6} /></>),
  layerCopy: (<><path d="M1 5 L6 2 H17 L12 5Z M1 16 L6 13 H17 L12 16Z" fill="#c6ecd8" stroke="#37594c" strokeWidth=".8" /><path d="M6 6 H10 V12 H6Z M9 8 H13 V14 H9Z" fill="#cdd8f6" stroke="#5a6fa8" strokeWidth=".8" /></>),
  axesHand: (<><Axes /><path d="M9 7 L14 2 L18 3 L13 8Z" fill="#2858c0" /></>),
  axesMove: (<><P d="M4 17 V9 L10 13" c="#888" w={1.2} /><P d="M11 1 V8 L17 10 M11 8 L7 11 M4 5 L9 3" c="#c22" w={1.2} /><Dots at={[[4, 5]]} c="#e0901a" r={1.8} /></>),
  axesAbs: (<><P d="M9 1 V9" c="#24c" w={1.3} /><P d="M9 9 L16 5" c="#292" w={1.2} /><P d="M9 9 L17 12" c="#c22" w={1.2} /><text x="0" y="16" fontSize="5" fontWeight="700" fill="#223">(0,0,0)</text></>),
  axesSave: (<><Axes /><rect x="9" y="1" width="8" height="8" fill="#2b3f98" /><rect x="11" y="1" width="4" height="4" fill="#fff" /></>),
  colorDiamond: (<><Palette /><Diamond x={12} y={9} r={4} /></>),
  showDiamond: (<><path d="M1 4 L6 7 L3 9Z" fill="#1c9a3a" /><path d="M1 10 L6 12 L2 16Z" fill="#d22" /><Diamond x={11} y={9} r={5} /></>),
  hideDiamond: (<><Diamond x={7} y={5} r={4} /><PaleDiamond x={12} y={13} /><path d="M2 10 L7 14 L2 16Z" fill="#e0701a" /></>),
  pickDiamond: (<><PaleDiamond x={7} y={7} /><path d="M8 6 L16 12 L12 13 L14 17 L12 18 L10 14 L8 15Z" fill="#fff" stroke="#333" strokeWidth=".9" /></>),
  swapDiamond: (<><Diamond x={6} y={5} r={4} /><PaleDiamond x={12} y={13} /><P d="M11 4 Q16 3 16 7 M2 11 L6 15" c="#e0701a" w={1.6} /></>),
  unhideDiamond: (<><PaleDiamond x={6} y={5} /><Diamond x={11} y={13} r={4} /><P d="M2 9 L5 14" c="#e0701a" w={1.6} /></>),
  goldDiamond: (<><PaleDiamond x={6} y={5} /><GoldCube x={6} y={7} s={0.65} /><P d="M2 9 L6 14" c="#e0701a" w={1.6} /></>),
  ruler: (<><P d="M2 5 H16" c="#2a48b8" w={1.3} /><path d="M2 5 L5 3 V7Z M16 5 L13 3 V7Z" fill="#2a48b8" /><rect x="1" y="9" width="16" height="4" fill="#f3dc7a" stroke="#9a7a1c" strokeWidth=".8" /></>),
  angle: (<><P d="M2 2 V16 H16 M2 9 Q8 9 9 16" c="#c33" /><path d="M4 2 L7 1 L17 12 L14 15Z" fill="#f3d25a" stroke="#9a7a1c" strokeWidth=".8" /></>),
  crossBox: (<><rect x="1" y="1" width="16" height="16" fill="#f6e9e9" stroke="#d22" strokeWidth="1.4" /><P d="M3 2 L15 16" c="#1c34b8" w={2.6} /><P d="M15 2 L3 15 M11 5 L16 4" c="#222" w={1.6} /></>),
  redBox: (<><rect x="2" y="2" width="14" height="14" fill="#f1f1f1" stroke="#e0201c" strokeWidth="2.2" /><path d="M9 14 V9 L14 14Z" fill="#9ac" stroke="#567" strokeWidth=".6" /></>),
  curveTest: (<><rect width="18" height="18" fill="#d4d0ce" /><P d="M2 14 Q4 3 8 5" c="#4a2a9a" w={1.2} /><P d="M11 2 L15 8 M15 2 L11 8 M11 11 L15 17 M15 11 L11 17" c="#d33" w={0.9} /></>),
  redWrench: (<><P d="M3 16 L12 8" c="#d81c1c" w={3} /><circle cx="13" cy="8" r="3" fill="none" stroke="#d81c1c" strokeWidth="2" /><path d="M1 7 L6 10 L4 16Z" fill="#e79" /><text x="5" y="5" fontSize="5" fontWeight="700" fill="#24a">X=1</text></>),
  balloon: (<><circle cx="11" cy="6" r="5" fill="#f5efef" stroke="#8a3a3a" /><P d="M7 10 L2 15 M2 16 H17 V1" c="#666" w={0.9} /><P d="M10 4 L11 3 V9" c="#622" w={1.2} /></>),
  clampBox: (<><rect width="18" height="18" fill="#7fe3ee" /><P d="M1 7 H10 V16 M1 7 V10 H7 V16" c="#a04a3a" w={1.4} /><P d="M5 3 L8 5 L11 2 L14 5 L17 2" c="#28c" w={1.5} /></>),
  blocks: <Blocks />,
  grayBlocks: <Blocks f="#aaaaa0" c="#92928a" />,
  graySplit: (<><Blocks f="#adada3" c="#92928a" third={false} /><P d="M9 12 L16 2 M12 13 H17 M11 8 H17" c="#a2a298" w={2.4} /></>),
  grayStack: <path d="M6 16 V9 L8 3 L11 8 L16 11 V16 L9 18Z" fill="#a8a89e" />,
  blocksCut: (<><Blocks /><P d="M4 3 L17 14 M15 4 L7 14" c="#222" w={1.4} /></>),
  first: <path d="M1 3 H2 V15 H1Z M9 4 V14 L3 9Z M16 4 V14 L10 9Z" fill="#a89292" />,
  prev: <path d="M4 3 H5 V15 H4Z M13 4 V14 L6 9Z" fill="#a89292" />,
  next: <path d="M13 3 H14 V15 H13Z M5 4 V14 L12 9Z" fill="#a89292" />,
  last: <path d="M16 3 H17 V15 H16Z M9 4 V14 L15 9Z M2 4 V14 L8 9Z" fill="#a89292" />,
  playTo: (<><path d="M1 4 V14 L6 9Z" fill="#a89292" /><rect x="6" y="7" width="7" height="8" fill="#879898" /><circle cx="13" cy="7" r="4" fill="#879898" /></>),
  replay: (<><path d="M1 4 V14 L6 9Z" fill="#d81c1c" /><path d="M11 1 L15 2 L12 7 L15 8 L7 15 L10 8 L8 7Z" fill="#f4d638" stroke="#8a7410" strokeWidth=".7" /><P d="M8 14 Q12 10 15 16" c="#1c2f80" w={1.8} /></>),
  fit: (<><rect x="5" y="6" width="8" height="6" fill="#5a8fd0" stroke="#234" /><P d="M1 5 V2 H5 M13 2 H17 V5 M17 13 V16 H13 M5 16 H1 V13 M3 4 L5 6 M15 4 L13 6 M3 14 L5 12 M15 14 L13 12" c="#446" w={1.3} /></>),
};

/* ---------- shell ---------- */

const Window = styled.div`
  display: flex;
  flex-direction: column;
  height: 100vh;
  margin-right: 3px;
  background: #111;
  border-radius: 4px 4px 0 0;
  border-left: 3px solid #17181c;
  border-right: 2px solid #202127;
  border-bottom: 6px solid #14151a;
`;

const TitleBar = styled.header`
  display: flex;
  align-items: center;
  flex: none;
  height: 18px;
  gap: 2px;
  padding: 3px 1px 0 2px;
  color: #fff;
  font-size: 9px;
  font-weight: 700;
  border-radius: 4px 4px 0 0;
  background: linear-gradient(#2c2c30 0 1px, #6e6e74 1px 4px, #4b4b50 5px, #1b1b1b 6px);
`;

const Brand = styled.span`
  margin-left: auto;
  margin-right: 14px;
  font-family: "DejaVu Sans", sans-serif;
`;

const CaptionButton = styled.button`
  display: grid;
  place-items: center;
  width: 11px;
  height: 11px;
  padding: 0;
  border: 1px solid ${(p) => (p.$light ? "#888" : "#777")};
  border-radius: 2px;
  color: ${(p) => (p.$light ? "#444" : "#fff")};
  background: ${(p) => (p.$close ? "#d8523c" : p.$light ? "#fafafa" : "#4a4a4e")};
`;

const MenuBar = styled.nav`
  display: flex;
  align-items: center;
  flex: none;
  height: 18px;
  padding: 0 3px;
  background: #e4e4e4;
  font-family: Lato, sans-serif;
`;

const MenuItem = styled.button`
  padding: 0 4px;
  border: 0;
  background: none;
`;

const PartButton = styled.button`
  display: flex;
  padding: 0;
  border: 0;
  background: none;
`;

const MenuEnd = styled.div`
  display: flex;
  gap: 2px;
  margin-left: auto;
`;

const ToolRow = styled.div`
  display: flex;
  flex: none;
  height: ${(p) => p.$h || 25}px;
  border-top: 1px solid #f4f4f4;
  border-bottom: 1px solid #bdbdbd;
  background: linear-gradient(#e3e3e3, ${(p) => p.$to || "#cbcbcb"});
`;

const Group = styled.div`
  display: flex;
  align-items: center;
  flex: none;
  min-width: ${(p) => p.$min || 0}px;
  border-right: 1px solid #b9b9b9;

  &:last-child {
    flex: 1;
    min-width: 0;
    border-right: 0;
  }
`;

const Grip = styled.i`
  flex: none;
  align-self: center;
  width: ${(p) => (p.$flat ? "17px" : "2px")};
  height: ${(p) => (p.$flat ? "2px" : "16px")};
  margin: ${(p) => (p.$flat ? "2px 0" : "0 2px")};
  background: repeating-linear-gradient(${(p) => (p.$flat ? "90deg" : "180deg")}, #999 0 1px, #f2f2f2 1px 2px);
`;

const Sep = styled.i`
  flex: none;
  ${(p) =>
    p.$flat
      ? css`
          height: 2px;
          width: 20px;
          margin: 1px 0 2px;
          border-top: 1px solid #b5b5b5;
          border-bottom: 1px solid #f5f5f5;
        `
      : css`
          align-self: stretch;
          width: 2px;
          margin: 1px 1px 1px 2px;
          border-left: 1px solid #b5b5b5;
          border-right: 1px solid #f5f5f5;
        `}
`;

const IconButton = styled.button`
  display: grid;
  place-items: center;
  flex: none;
  width: ${(p) => p.$w || 22}px;
  height: 22px;
  padding: 0;
  border: 1px solid ${(p) => (p.$on ? "#888" : "transparent")};
  border-radius: 2px;
  background: ${(p) => (p.$on ? "#fdfdfd" : "none")};
`;

const Glyph = styled.svg`
  display: block;
  flex: none;
  width: ${(p) => p.$size || 17}px;
  height: ${(p) => p.$size || 17}px;
`;

const StartButton = styled.button`
  display: flex;
  align-items: center;
  justify-content: space-between;
  width: 47px;
  height: 21px;
  padding: 0 2px 0 1px;
  border: 1px solid #b4b4b4;
  border-radius: 2px;
  background: #e9e9e9;
  font-family: Lato, sans-serif;
`;

const OverflowButton = styled.button`
  display: flex;
  flex-direction: column;
  align-items: center;
  justify-content: space-between;
  align-self: stretch;
  width: 8px;
  margin: 2px 0 4px auto;
  padding: 0;
  border: 0;
  background: none;
`;

const ArrowButton = styled.button`
  display: flex;
  align-self: ${(p) => (p.$low ? "flex-end" : "center")};
  margin-left: ${(p) => (p.$end ? "auto" : "0")};
  padding: ${(p) => (p.$low ? "0 2px 5px" : "0 2px")};
  border: 0;
  background: none;
`;

const SelectWrap = styled.label`
  display: grid;
  grid-template-columns: 1fr 11px;
  align-items: center;
  flex: none;
  width: ${(p) => p.$w}px;
  height: 12px;
  margin-left: ${(p) => p.$gap || 4}px;
  margin-right: 3px;
  border: 1px solid #667;
  background: #fff;

  & > select {
    grid-area: 1 / 1 / 2 / 3;
    width: 100%;
    height: 10px;
    padding: 0 0 0 1px;
    border: 0;
    appearance: none;
    background: none;
    line-height: 10px;
  }

  & > span {
    display: grid;
    place-items: center;
    grid-area: 1 / 2;
    height: 10px;
    background: linear-gradient(90deg, #bfe0fb, #4f9be6);
    pointer-events: none;
  }
`;

const StatusBar = styled.div`
  display: flex;
  align-items: center;
  flex: none;
  height: 15px;
  padding-left: 1px;
  background: #dadada;
  font-weight: 700;
`;

const StatusCell = styled.p`
  flex: ${(p) => p.$flex};
  align-self: stretch;
  display: flex;
  align-items: center;
  justify-content: center;
  margin: 0;
  border-right: 1px solid #f3f3f3;

  &:first-child { justify-content: flex-start; }
  &:last-child { border-right: 0; }
`;

const ScrollStrip = styled.div`
  position: relative;
  flex: none;
  height: 11px;
  background: linear-gradient(#b4b4b4 0 2px, #dedede 2px 4px, #a0a0a0 4px 5px, #dedede 5px 8px, #999 8px);
`;

const ScrollBar = styled.div`
  position: absolute;
  z-index: 1;
  left: 49px;
  top: 0;
  display: grid;
  grid-template-columns: 14px 43px 14px;
  height: 14px;
  background: #1b1b1b;
`;

const ScrollButton = styled.button`
  display: grid;
  place-items: center;
  padding: 0;
  border: 1px solid #999;
  background: #e6e6e6;
`;

const Body = styled.main`
  display: flex;
  flex: 1;
  min-height: 0;
  background: #d6d6d6;
`;

const ToolColumn = styled.div`
  display: flex;
  flex-direction: column;
  align-items: center;
  flex: none;
  width: 25px;
  border-right: 1px solid #f2f2f2;
  box-shadow: inset -1px 0 #b8b8b8;
`;

const IconStack = styled.div`
  display: flex;
  flex-direction: column;
  align-items: center;
  justify-content: space-between;
  flex: ${(p) => (p.$fixed ? "none" : 1)};
  padding-bottom: ${(p) => p.$end || 0}px;

  & > button { height: ${(p) => (p.$fixed ? 23 : 21)}px; }
`;

const ColumnEnd = styled.div`
  display: flex;
  justify-content: space-between;
  align-items: center;
  flex: none;
  width: 17px;
  height: 10px;
`;

const Canvas = styled.section`
  position: relative;
  flex: 1;
  min-width: 0;
  border: 1px solid #8e1c1c;
  background: #000;

  & > svg {
    display: block;
    width: 100%;
    height: 100%;
  }
`;

const ViewLabel = styled.span`
  position: absolute;
  left: 2px;
  bottom: 0;
  color: #d21f1f;
  font: 10px/12px "Liberation Sans", sans-serif;
`;

const TabStrip = styled.aside`
  display: flex;
  flex-direction: column;
  flex: none;
  width: 22px;
  padding: 11px 2px 2px 0;
  border-left: 1px solid #777;
  background: #a2a2a2;
`;

const Tab = styled.button`
  display: grid;
  place-items: center;
  flex: 0 1 29px;
  min-height: 0;
  margin-bottom: ${(p) => (p.$gap ? 9 : 1)}px;
  padding: 0;
  border: 1px solid #777;
  border-left: 0;
  border-radius: 0 3px 3px 0;
  background: linear-gradient(90deg, #e4e4e4, #c5c5c5);
`;

const TornEdge = styled.svg`
  display: block;
  flex: none;
  width: 100%;
  height: 7px;
`;

const TabScroll = styled.div`
  display: flex;
  flex-direction: column;
  align-items: center;
  justify-content: space-between;
  flex: 1;
  padding-top: 2px;
  background: #b4b4b4;
`;

const TabScrollButton = styled.button`
  display: grid;
  place-items: center;
  width: 12px;
  height: 11px;
  padding: 0;
  border: 1px solid #999;
  background: #eee;
`;

const Gutter = styled.div`
  flex: none;
  width: 6px;
  border-left: 1px solid #aaa;
  background: #eee;
`;

/* ---------- pieces ---------- */

const Icon = ({ name, size }) => (
  <Glyph $size={size} viewBox="0 0 18 18" aria-hidden="true">{icons[name]}</Glyph>
);

const Triangle = () => (
  <svg width="5" height="4" viewBox="0 0 5 4" aria-hidden="true"><path d="M0 0 H5 L2.5 3Z" fill="#111" /></svg>
);

const Chevrons = ({ down }) => (
  <svg width="6" height="6" viewBox="0 0 6 6" aria-hidden="true">
    <path d={down ? "M1 0 L3 2 L5 0 M1 3 L3 5 L5 3" : "M0 1 L2 3 L0 5 M3 1 L5 3 L3 5"} fill="none" stroke="#111" strokeWidth="1.2" />
  </svg>
);

const Overflow = () => (
  <OverflowButton aria-label="More tools"><Chevrons /><Triangle /></OverflowButton>
);

const Arrow = (props) => (
  <ArrowButton aria-label="Options" {...props}><Triangle /></ArrowButton>
);

/* "|" is a separator, "v" a drop-down arrow, "*" marks a pressed button */
const Tools = ({ list, flat, w, size }) =>
  list.split(" ").map((name, i) => {
    if (name === "|") return <Sep key={i} $flat={flat} />;
    if (name === "v") return <Arrow key={i} />;
    const on = name.startsWith("*");
    const id = on ? name.slice(1) : name;
    return (
      <IconButton key={i} $on={on} $w={w} aria-label={id} aria-pressed={on || undefined}>
        <Icon name={id} size={size} />
      </IconButton>
    );
  });

const ToolGroup = ({ list, min, overflow, end }) => (
  <Group $min={min}>
    <Grip />
    <Tools list={list} />
    {overflow && <Overflow />}
    {end && <Arrow $low $end />}
  </Group>
);

const Dropdown = ({ label, value, w, gap }) => (
  <SelectWrap $w={w} $gap={gap}>
    <select aria-label={label} defaultValue={value}><option>{value}</option></select>
    <span><svg width="7" height="5" viewBox="0 0 7 5"><path d="M0 0 H7 L3.5 5Z" fill="#112" /></svg></span>
  </SelectWrap>
);

const StackEnd = ({ single }) => (
  <ColumnEnd>
    <svg width="4" height="5" viewBox="0 0 4 5"><path d="M3 0 V5 L0 2.5Z" fill="#111" /></svg>
    {!single && <Chevrons down />}
  </ColumnEnd>
);

/* the underscore stands before each menu's access key */
const menus = ["_File", "_Edit", "_View", "In_sert", "Fo_rmat", "_Tools", "_Astroid", "_Assemblies", "_Information", "Ana_lysis", "_Preferences", "Wind_ow", "_Help", "Custom"];

const Menu = ({ text }) => {
  const at = text.indexOf("_");
  if (at < 0) return <MenuItem>{text}</MenuItem>;
  return (
    <MenuItem>
      {text.slice(0, at)}<u>{text[at + 1]}</u>{text.slice(at + 2)}
    </MenuItem>
  );
};

const topGroups = [
  { min: 131, list: "wcs layoutSave | prismCursor prism prismNew", end: true },
  { min: 340, list: "sheet sheetTwo sheetGrid mesh curveNet ribbons patch sweep | grid bands trim extend | offsetFace flange", overflow: true },
  { min: 39, list: "surface", overflow: true },
  { min: 38, list: "dims", overflow: true },
  { min: 38, list: "gem", overflow: true },
  { list: "stripes", overflow: true },
];

const curveGroups = [
  { min: 171, list: "sketchEdit trimCurve sheetCorner arcPair fillet sCurve cross", end: true },
  { min: 398, list: "circleLine | plus pluses chamfer | spline rect | curvesA curvesB curvesB | contour project bluePatch | mirror wrap isocline | section", end: true },
  { min: 239, list: "cubeMove cubePull cubeCopy cubeList roundCube goldCyl cubeDelete | cubePaste v | cubePattern", overflow: true },
  { min: 46, list: "spool v", end: true },
  { min: 38, list: "route", overflow: true },
  { list: "bucket", overflow: true },
];

const bottomGroups = [
  { min: 38, list: "crossBox", end: true },
  { min: 133, list: "redBox curveTest redWrench balloon clampBox", overflow: true },
  { min: 145, list: "blocks grayBlocks graySplit grayStack blocksCut", overflow: true },
  { list: "first prev next last playTo | replay", end: true },
];

const tabs = ["navParts", "navConstraints", "navHistory*", "webPage*", "clock", "roles", "spectrum", "tool", "people", "picture", "folder", "folder", "folder"];

const scrollGlyphs = [
  ["Top", "M1 1 H7 M4 2 L7 6 H1Z", "#999"],
  ["Up", "M4 2 L7 6 H1Z", "#999"],
  ["Down", "M1 2 H7 L4 6Z", "#333"],
  ["Bottom", "M1 1 H7 L4 5Z M1 7 H7", "#333"],
];

const Model = () => (
  <svg viewBox="54 133 824 474" aria-label="Bolt with washer and nut">
    <defs>
      <linearGradient id="sheetFill" x1="0" y1="0" x2="1" y2="1">
        <stop offset="0" stopColor="#dce8ff" /><stop offset="1" stopColor="#6a8fee" />
      </linearGradient>
      <linearGradient id="shank" x1="420" y1="195" x2="345" y2="440" gradientUnits="userSpaceOnUse">
        <stop offset="0" stopColor="#fff" /><stop offset=".3" stopColor="#fff" />
        <stop offset=".6" stopColor="#b5cbd3" /><stop offset="1" stopColor="#4e5c63" />
      </linearGradient>
      <linearGradient id="tip" x1="880" y1="390" x2="790" y2="620" gradientUnits="userSpaceOnUse">
        <stop offset="0" stopColor="#f4feff" /><stop offset=".35" stopColor="#fff" />
        <stop offset=".65" stopColor="#b9ced6" /><stop offset="1" stopColor="#64747b" />
      </linearGradient>
      <linearGradient id="bevel" x1="920" y1="400" x2="830" y2="630" gradientUnits="userSpaceOnUse">
        <stop offset="0" stopColor="#d9f4fa" /><stop offset=".4" stopColor="#cfe6ec" /><stop offset="1" stopColor="#697a82" />
      </linearGradient>
      <linearGradient id="rim" x1="620" y1="180" x2="455" y2="600" gradientUnits="userSpaceOnUse">
        <stop offset="0" stopColor="#0580c0" /><stop offset=".35" stopColor="#0a86c8" /><stop offset=".7" stopColor="#045f94" /><stop offset="1" stopColor="#033a5c" />
      </linearGradient>
      <linearGradient id="side" x1="0" y1="220" x2="0" y2="460" gradientUnits="userSpaceOnUse">
        <stop offset="0" stopColor="#87989f" /><stop offset="1" stopColor="#74838a" />
      </linearGradient>
    </defs>
    <g transform="translate(260 250) scale(.3333)" stroke="#26353d" strokeWidth="2" strokeLinejoin="round">
      <path d="M335 104 L413 113 L404 190 L306 425 L284 467 L203 459 L228 276Z" fill="#94a6ae" />
      <path d="M180 39 Q212 34 250 47 L413 113 L335 104Z" fill="#d3f3f8" />
      <path d="M180 39 L335 104 Q272 180 228 276 L70 212 Q108 105 180 39Z" fill="#fff" />
      <path d="M335 104 Q272 180 228 276" fill="none" stroke="#94a6ae" strokeWidth="3" />
      <path d="M70 212 L228 276 L203 459 L44 394 Q36 300 70 212Z" fill="url(#side)" />
      <path d="M350 168 L530 240 L435 470 L270 405 Q238 378 250 312 Q278 195 350 168Z" fill="url(#shank)" />
      <path d="M181 234 L307 287 L293 420 M307 287 L240 345" fill="none" stroke="#65747c" />
      <path d="M630 170 L692 195 Q714 208 716 238 L560 612 Q545 624 520 622 L462 602 Q434 588 434 530 Q440 385 526 245 Q580 165 630 170Z" fill="url(#rim)" />
      <path d="M692 195 Q714 208 716 238 L565 611 Q545 625 520 622 Q488 612 487 556 Q492 430 572 297 Q640 192 692 195Z" fill="#004f7c" />
      <path d="M650 230 Q682 226 722 238 L893 310 L810 300Z" fill="#82a8ec" />
      <path d="M650 230 L810 300 Q798 385 706 473 L540 406 Q578 292 650 230Z" fill="#b9f4ff" />
      <path d="M540 406 L706 473 Q711 590 680 655 L513 587 Q500 490 540 406Z" fill="#546f9f" />
      <path d="M810 300 L893 310 Q900 345 896 385 L800 625 Q770 664 740 666 Q705 665 680 655 Q711 590 706 473 Q798 385 810 300Z" fill="#7797da" />
      <path d="M893 320 Q848 298 800 355 Q730 440 710 560 Q700 655 740 666 Q772 664 800 625 L896 385Z" fill="#6585c2" />
      <path d="M845 371 L928 405 Q950 430 945 480 Q932 580 880 622 Q850 640 825 630 L752 605 Q730 588 742 520 Q772 395 845 371Z" fill="url(#tip)" />
      <path d="M928 405 Q950 430 945 480 Q932 580 880 622 Q850 640 825 630 Q802 600 824 520 Q860 418 928 405Z" fill="url(#bevel)" />
      <path d="M938 433 Q948 450 945 490 Q932 580 880 618 Q850 626 848 590 Q843 545 872 484 Q902 436 938 433Z" fill="#98a9b1" />
    </g>
    <g fontFamily="Liberation Sans, sans-serif" fontSize="12">
      <text x="315" y="326" fill="#777">ZC</text>
      <text x="337" y="370" fill="#d63a32">YC</text>
      <text x="357" y="390" fill="#9c8080" opacity=".7">XC</text>
    </g>
  </svg>
);

const App = () => (
  <>
    <GlobalStyle />
    <Window>
      <TitleBar>
        <Icon name="nx" size={13} />
        <span>NX 6 - Modeling - [bolt.prt (Modified) ]</span>
        <Brand>SIEMENS</Brand>
        <CaptionButton aria-label="Minimize"><svg width="5" height="5"><path d="M0 4 H5" stroke="currentColor" strokeWidth="2" /></svg></CaptionButton>
        <CaptionButton aria-label="Maximize"><svg width="6" height="6"><rect x="1" y="1" width="4" height="4" fill="none" stroke="currentColor" /></svg></CaptionButton>
        <CaptionButton $close aria-label="Close"><svg width="6" height="6"><path d="M1 1 L5 5 M5 1 L1 5" stroke="currentColor" strokeWidth="1.4" /></svg></CaptionButton>
      </TitleBar>

      <MenuBar>
        <Grip />
        <PartButton aria-label="Part"><Icon name="part" size={12} /></PartButton>
        {menus.map((m) => <Menu key={m} text={m} />)}
        <MenuEnd>
          <CaptionButton $light aria-label="Minimize part"><svg width="6" height="6"><path d="M0 5 H5" stroke="currentColor" strokeWidth="1.4" /></svg></CaptionButton>
          <CaptionButton $light aria-label="Restore part"><svg width="7" height="7"><path d="M2 3 V1 H6 V4 H4 M1 3 H4 V6 H1Z" fill="none" stroke="currentColor" /></svg></CaptionButton>
          <CaptionButton $light aria-label="Close part"><svg width="6" height="6"><path d="M1 1 L5 5 M5 1 L1 5" stroke="currentColor" strokeWidth="1.4" /></svg></CaptionButton>
        </MenuEnd>
      </MenuBar>

      <ToolRow>
        <Group $min={306}>
          <Grip />
          <StartButton><Icon name="nx" size={17} />Start<Triangle /></StartButton>
          <Tools list="open save print | cut | undo redo | swap windows | info" />
          <Overflow />
        </Group>
        {topGroups.map((g, i) => <ToolGroup key={i} {...g} />)}
      </ToolRow>

      <ToolRow>{curveGroups.map((g, i) => <ToolGroup key={i} {...g} />)}</ToolRow>

      <ToolRow $h={20} $to="#d6d6d6">
        <Group>
          <Dropdown label="Selection filter" value="No Selection Filter" w={82} />
          <Dropdown label="Selection scope" value="Entire Assembly" w={87} />
          <Tools list="find | snap v back hint color step grayBox | marquee v" w={17} size={13} />
          <Arrow $low $end />
        </Group>
      </ToolRow>

      <StatusBar>
        <StatusCell $flex={436}>Select objects and use MB3, or double-click an object</StatusCell>
        <StatusCell $flex={438} />
        <StatusCell $flex={13} />
        <StatusCell $flex={26} />
        <StatusCell $flex={18}><Icon name="fit" size={12} /></StatusCell>
      </StatusBar>

      <ScrollStrip>
        <ScrollBar>
          <ScrollButton aria-label="Scroll left"><svg width="8" height="8"><path d="M6 1 L2 4 L6 7" fill="none" stroke="#222" strokeWidth="1.5" /></svg></ScrollButton>
          <span />
          <ScrollButton aria-label="Scroll right"><svg width="8" height="8"><path d="M2 1 L6 4 L2 7" fill="none" stroke="#222" strokeWidth="1.5" /></svg></ScrollButton>
        </ScrollBar>
      </ScrollStrip>

      <Body>
        <ToolColumn>
          <Grip $flat />
          <IconStack $end={18}>
            <Tools flat list="sketch sketchOld extrude revolve sweepGuide tube | holeOld hole boss pocket pad emboss slot groove udf thicken instance wire" />
          </IconStack>
          <StackEnd />
          <Sep $flat />
          <Grip $flat />
          <Tools list="assembly" />
          <StackEnd />
        </ToolColumn>
        <ToolColumn>
          <Grip $flat />
          <IconStack>
            <Tools flat list="datum sphere blend law law draft shell thread pads unite pattern mirrorBody wrapBox offsetBox cylinders twinBox plate plates addBool" />
          </IconStack>
          <StackEnd />
          <Sep $flat />
          <Grip $flat />
          <Tools list="blueAdd" />
          <StackEnd />
        </ToolColumn>

        <Canvas>
          <Model />
          <ViewLabel>TOP WORK Camera TOP</ViewLabel>
        </Canvas>

        <ToolColumn>
          <Grip $flat />
          <IconStack $fixed><Tools flat list="jpeg monitor paintHand" /></IconStack>
          <StackEnd single />
          <Sep $flat />
          <Grip $flat />
          <IconStack $end={10}>
            <Tools flat list="*chain line lineAxes parallel lineCross tangent twoCircles hatch | arc arcLine arcBars arcCorner | circle circleTan" />
          </IconStack>
          <StackEnd />
          <Sep $flat />
          <Grip $flat />
          <Tools list="dimWrench" />
          <StackEnd />
        </ToolColumn>
        <Gutter />
        <TabStrip>
          {tabs.map((t, i) => {
            const name = t.replace("*", "");
            return <Tab key={i} $gap={t.endsWith("*")} aria-label={name}><Icon name={name} size={17} /></Tab>;
          })}
          <TornEdge viewBox="0 0 19 7" preserveAspectRatio="none" aria-hidden="true">
            <path d="M0 5 Q5 7 8 4 T19 3 V7 H0Z" fill="#b4b4b4" />
            <path d="M0 3 Q5 6 8 3 T19 2" fill="none" stroke="#eef3f3" strokeWidth="2" />
            <path d="M0 5 Q5 8 8 5 T19 4" fill="none" stroke="#777" strokeWidth=".8" />
          </TornEdge>
          <TabScroll>
            {scrollGlyphs.map(([label, d, c]) => (
              <TabScrollButton key={label} aria-label={label}>
                <svg width="8" height="8"><path d={d} fill={c} stroke={c} strokeWidth=".8" /></svg>
              </TabScrollButton>
            ))}
          </TabScroll>
        </TabStrip>
      </Body>

      <ToolRow $h={26} $to="#d2d2d2">
        <Group $min={461}>
          <Grip />
          <Dropdown label="Work layer" value="1" w={31} gap={2} />
          <Tools list="layerList layerWin layers layerMove layerCopy | *axesHand axesMove axesAbs axesSave colorDiamond showDiamond hideDiamond pickDiamond swapDiamond unhideDiamond goldDiamond | ruler angle" />
          <Arrow $low $end />
        </Group>
        {bottomGroups.map((g, i) => <ToolGroup key={i} {...g} />)}
      </ToolRow>
    </Window>
  </>
);

export default App;
